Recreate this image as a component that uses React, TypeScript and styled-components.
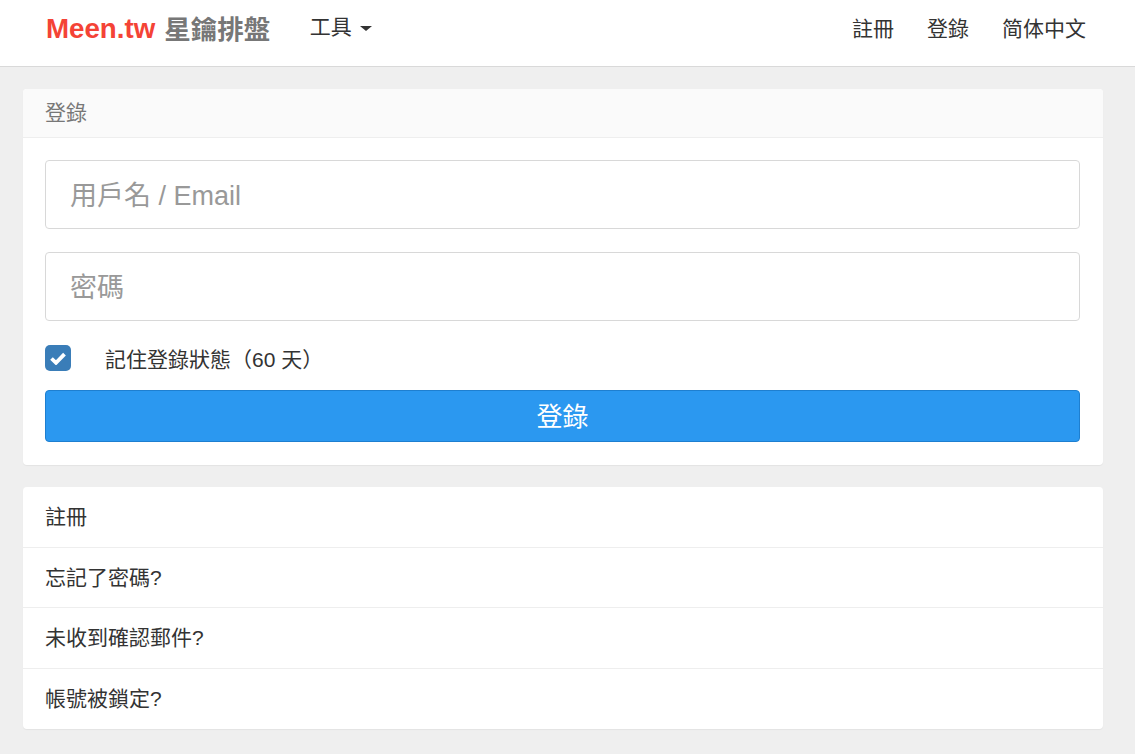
import React from "react";
import styled, { createGlobalStyle } from "styled-components";

const FONT = `"Liberation Sans", "Noto Sans CJK TC", sans-serif`;

const Global = createGlobalStyle`
  html, body { margin: 0; padding: 0; background: #efefef; font-family: ${FONT}; color: #333; }
  * { box-sizing: border-box; }
`;

const Navbar = styled.nav`
  height: 67px;
  background: #fff;
  border-bottom: 1px solid #d9d9d9;
  display: flex;
  align-items: flex-start;
  padding: 0 49px 0 46px;
`;
const Brand = styled.a`
  display: flex;
  align-items: center;
  gap: 9px;
  height: 58px;
  font-size: 26.5px;
  font-weight: 700;
  color: #777;
`;
const BrandRed = styled.span`
  color: #f44336;
  font-size: 27.7px;
`;
const BrandName = styled.span`
  margin-top: -4px;
`;
const ToolMenu = styled.a`
  display: flex;
  align-items: center;
  margin-left: 39.5px;
  height: 50px;
  font-size: 21px;
  color: #333;
`;
const Caret = styled.span`
  width: 0;
  height: 0;
  margin-left: 8.5px;
  margin-top: 7px;
  border-top: 5.5px solid #333;
  border-left: 6.5px solid transparent;
  border-right: 6.5px solid transparent;
`;
const NavRight = styled.div`
  margin-left: auto;
  display: flex;
  gap: 33px;
  height: 54px;
  align-items: center;
  font-size: 21px;
  color: #333;
`;
const Main = styled.main`
  padding: 22px 32px 25px 23px;
  display: flex;
  flex-direction: column;
  gap: 22px;
`;
const Panel = styled.section`
  background: #fff;
  border-radius: 4px;
  box-shadow: 0 1px 1px rgba(0, 0, 0, 0.05);
  overflow: hidden;
`;
const PanelHeading = styled.div`
  height: 49px;
  background: #fafafa;
  border-bottom: 1px solid #eeeeee;
  padding: 0 22px 5px;
  display: flex;
  align-items: center;
  font-size: 21px;
  color: #777;
`;
const Form = styled.form`
  padding: 22px 23px 23px 22px;
  display: flex;
  flex-direction: column;
`;
const Input = styled.input`
  height: 69px;
  width: 100%;
  margin-bottom: 23px;
  border: 1px solid #d8d8d8;
  border-radius: 4px;
  padding: 3px 24px 0;
  font-family: ${FONT};
  font-size: 27px;
  color: #333;
  background: #fff;
  outline: none;
  &::placeholder { color: #999; opacity: 1; }
`;
const CheckRow = styled.label`
  display: flex;
  align-items: center;
  height: 26px;
  margin-top: 1px;
  margin-bottom: 19px;
  font-size: 21px;
  color: #333;
`;
const CheckBox = styled.span`
  width: 26px;
  height: 26px;
  margin-right: 34px;
  border-radius: 5px;
  background: #3a7db8;
  display: flex;
  align-items: center;
  justify-content: center;
`;
const SubmitButton = styled.button`
  height: 52px;
  width: 100%;
  background: #2b98f0;
  border: 1px solid #1e7fd0;
  border-radius: 4px;
  color: #fff;
  font-family: ${FONT};
  font-size: 26px;
  padding: 0 0 4px;
`;
const LinkRow = styled.a`
  display: flex;
  align-items: center;
  height: 61px;
  padding: 0 22px 4px;
  font-size: 21px;
  color: #333;
  &:nth-child(-n + 2) { height: 60px; }
  & + & { border-top: 1px solid #eeeeee; }
`;

export default function App() {
  return (
    <>
      <Global />
      <Navbar>
        <Brand>
          <BrandRed>Meen.tw</BrandRed>
          <BrandName>星鑰排盤</BrandName>
        </Brand>
        <ToolMenu>
          工具
          <Caret />
        </ToolMenu>
        <NavRight>
          <span>註冊</span>
          <span>登錄</span>
          <span>简体中文</span>
        </NavRight>
      </Navbar>
      <Main>
        <Panel>
          <PanelHeading>登錄</PanelHeading>
          <Form>
            <Input placeholder="用戶名 / Email" />
            <Input placeholder="密碼" type="password" />
            <CheckRow>
              <CheckBox>
                <svg width="16" height="13" viewBox="0 0 16 13">
                  <path d="M1.5 6.5 L6 10.8 L14.5 2.2" fill="none" stroke="#fff" strokeWidth="3.8" />
                </svg>
              </CheckBox>
              記住登錄狀態（60 天）
            </CheckRow>
            <SubmitButton type="button">登錄</SubmitButton>
          </Form>
        </Panel>
        <Panel>
          <LinkRow>註冊</LinkRow>
          <LinkRow>忘記了密碼?</LinkRow>
          <LinkRow>未收到確認郵件?</LinkRow>
          <LinkRow>帳號被鎖定?</LinkRow>
        </Panel>
      </Main>
    </>
  );
}
